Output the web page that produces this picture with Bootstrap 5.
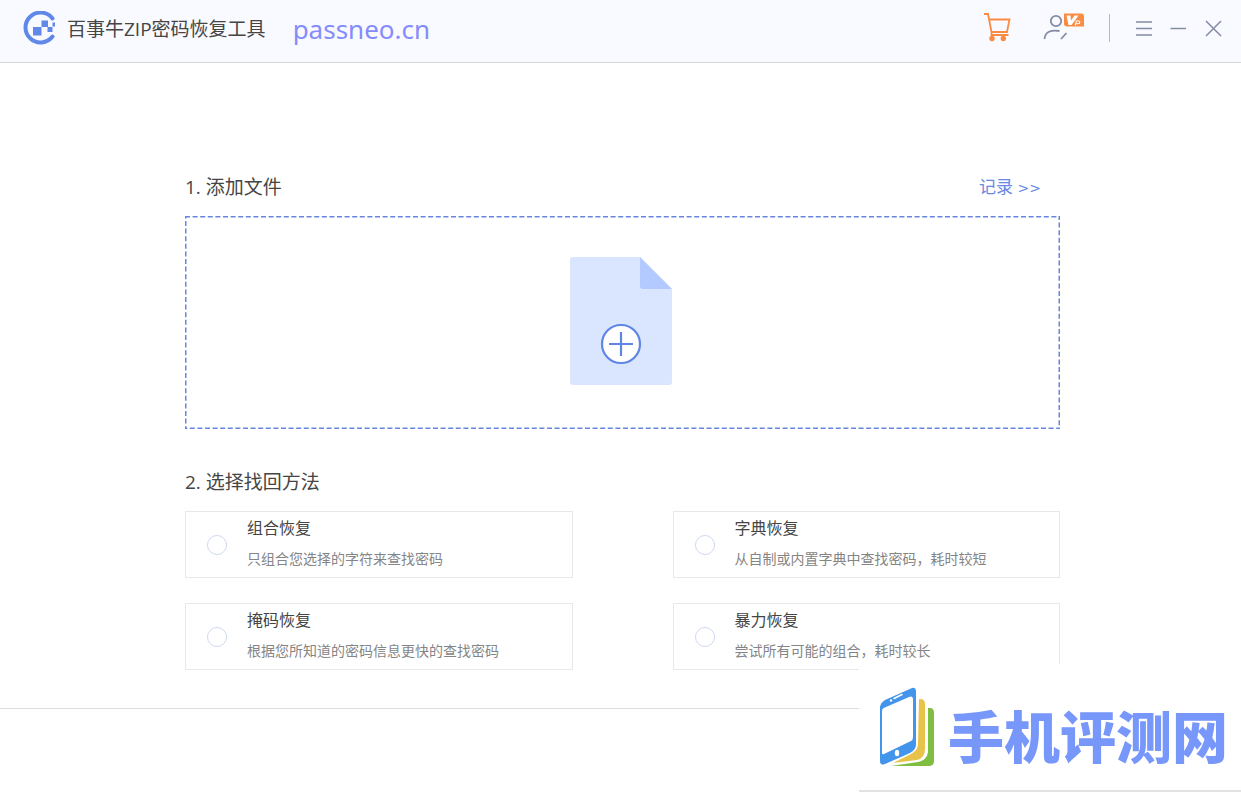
<!DOCTYPE html>
<html lang="zh-CN">
<head>
<meta charset="utf-8">
<meta name="viewport" content="width=device-width, initial-scale=1">
<title>百事牛ZIP密码恢复工具</title>
<link href="https://cdn.jsdelivr.net/npm/bootstrap@5.3.0/dist/css/bootstrap.min.css" rel="stylesheet">
<style>
  body { font-family: "Open Sans", "Noto Sans CJK SC", sans-serif; color: #454545; background: #fff; }
  .titlebar { height: 63px; background: #f9faff; border-bottom: 1px solid #d4d6da; padding: 0 17px 6px 22px; }
  .app-name { font-size: 19px; line-height: 28px; font-weight: 400; margin-left: 11px; padding-top: 1px; }
  .site-link { font-family: "Noto Sans", sans-serif; font-size: 26px; line-height: 32px; color: #848cfc; margin-left: 27px; padding-top: 2px; }
  .tool-btn { color: #858ba3; }
  .tool-btn svg { display: block; }
  .divider { width: 1px; height: 28px; background: #b0b8d4; }
  .workspace { padding: 109px 181px 38px 185px; border-bottom: 1px solid #dedede; }
  .step-title { font-size: 19px; line-height: 30px; font-weight: 400; margin: 0; }
  .history-link { font-size: 17px; line-height: 30px; color: #6788e4; margin-right: 19px; }
  .arrows { font-family: "DejaVu Sans", sans-serif; font-size: 14px; }
  .drop-zone { height: 213px; background: none; margin-top: 13px; padding: 0 3px 3px 0; }
  .drop-zone .outline { position: absolute; inset: 0; width: 100%; height: 100%; }
  .second-step { margin-top: 38px; }
  .methods { display: grid; grid-template-columns: 1fr 1fr; gap: 25px 100px; margin-top: 14px; }
  .method { height: 67px; border: 1px solid #e8e8e8; padding: 0 20px 0 21px; cursor: pointer; }
  .method .form-check-input { width: 20px; height: 20px; margin: 0 20px 0 0; border-color: #d0d8f0; flex: none; }
  .method-text { padding-bottom: 3px; }
  .method-name { font-size: 16px; line-height: 24px; }
  .method-note { font-size: 14px; line-height: 22px; margin-top: 8px; color: #858585; }
  .watermark { right: 0; bottom: 0; width: 382px; height: 128px; background: #fff; border-bottom: 2px solid #e2e2e2; padding: 0 14px 0 20px; }
  .watermark-name { font-family: "Noto Sans CJK SC", sans-serif; font-size: 56px; line-height: 64px; font-weight: 900; color: #7797fa; margin-left: 11px; white-space: nowrap; padding-top: 14px; }
</style>
</head>
<body class="position-relative min-vh-100">
<header class="titlebar d-flex align-items-center">
  <svg width="34" height="34" viewBox="0 0 34 34" aria-hidden="true">
    <path d="M30.500 7.500A15 15 0 1 0 30.500 25.500" fill="none" stroke="#5f88e8" stroke-width="4" stroke-linecap="round"/>
    <g fill="#5f88e8"><rect x="11" y="16" width="8.500" height="8.500"/><rect x="19.500" y="9.500" width="6.500" height="6.500"/><rect x="25.500" y="16" width="5" height="5"/><rect x="30.500" y="11.500" width="2.500" height="4"/></g>
  </svg>
  <h1 class="app-name mb-0">百事牛ZIP密码恢复工具</h1>
  <a class="site-link text-decoration-none" href="#">passneo.cn</a>
  <div class="d-flex align-items-center ms-auto">
    <button class="btn p-0 border-0 tool-btn" aria-label="购买">
      <svg width="28" height="30" viewBox="0 0 28 30" fill="none" stroke="#fa8b42" stroke-width="1.800">
        <path d="M1 1h4l3.500 18h16.500M6 6.500h20.500l-2.500 12.500M8.500 19v3h17"/>
        <g fill="#fa8b42" stroke="none"><circle cx="9" cy="25.500" r="2.700"/><circle cx="20.300" cy="25.500" r="2.700"/></g>
      </svg>
    </button>
    <button class="btn p-0 border-0 tool-btn ms-4 ps-2" aria-label="账户">
      <svg width="42" height="30" viewBox="0 0 42 30" fill="none" stroke="#858ba3" stroke-width="1.800">
        <circle cx="13" cy="8" r="5.200"/>
        <path d="M1.500 26C2 19 8 16.500 16.500 18M18 26l5.500-6"/>
        <path d="M21 .5h17a3 3 0 0 1 3 3v10H24a3 3 0 0 1-3-3z" fill="#fa8b42" stroke="none"/>
        <path d="M23.500 2.500h4l.5 5 3.500-5h4l-7 9.500h-3z" fill="#fff" stroke="none"/>
        <path d="M32.300 12.500l1-4.500h2.200c2 0 1.600 2.800-.4 2.800h-2.300" stroke="#fff" stroke-width="1.100"/>
      </svg>
    </button>
    <span class="divider ms-4"></span>
    <button class="btn p-0 border-0 tool-btn ms-4" aria-label="菜单">
      <svg width="20" height="20" viewBox="0 0 20 20" fill="none" stroke="currentColor" stroke-width="1.500"><path d="M2 4h16M2 10.500h16M2 17h16"/></svg>
    </button>
    <button class="btn p-0 border-0 tool-btn ms-3" aria-label="最小化">
      <svg width="16" height="20" viewBox="0 0 16 20" fill="none" stroke="currentColor" stroke-width="1.500"><path d="M.5 10.500H16"/></svg>
    </button>
    <button class="btn p-0 border-0 tool-btn ms-3" aria-label="关闭">
      <svg width="22" height="20" viewBox="0 0 22 20" fill="none" stroke="currentColor" stroke-width="1.500"><path d="M4 3l15 15M19 3L4 18"/></svg>
    </button>
  </div>
</header>

<main class="workspace">
  <div class="d-flex justify-content-between">
    <h2 class="step-title">1. 添加文件</h2>
    <a class="history-link text-decoration-none" href="#">记录 <span class="arrows">&gt;&gt;</span></a>
  </div>
  <button class="drop-zone btn border-0 rounded-0 w-100 d-flex align-items-center justify-content-center position-relative" aria-label="添加文件">
    <svg class="outline" aria-hidden="true"><rect x="0" y="0" width="100%" height="100%" fill="none" stroke="#6686e0" stroke-width="3" stroke-dasharray="5 2.600"/></svg>
    <svg width="104" height="128" viewBox="0 0 104 128" aria-hidden="true">
      <path d="M4 0h67l32 32v93a3 3 0 0 1-3 3H4a3 3 0 0 1-3-3V3a3 3 0 0 1 3-3z" fill="#dae6ff"/>
      <path d="M71 0l32 32H74a3 3 0 0 1-3-3z" fill="#b2caff"/>
      <circle cx="52" cy="87" r="19" fill="#fff" stroke="#5f85e5" stroke-width="2.200"/>
      <path d="M52 75v24M40 87h24" stroke="#5f85e5" stroke-width="2.200"/>
    </svg>
  </button>
  <h2 class="step-title second-step" id="methodTitle">2. 选择找回方法</h2>
  <div class="methods" role="radiogroup" aria-labelledby="methodTitle">
    <label class="method d-flex align-items-center" for="m1">
      <input class="form-check-input" type="radio" name="method" id="m1">
      <span class="method-text"><span class="method-name d-block">组合恢复</span><span class="method-note d-block">只组合您选择的字符来查找密码</span></span>
    </label>
    <label class="method d-flex align-items-center" for="m2">
      <input class="form-check-input" type="radio" name="method" id="m2">
      <span class="method-text"><span class="method-name d-block">字典恢复</span><span class="method-note d-block">从自制或内置字典中查找密码，耗时较短</span></span>
    </label>
    <label class="method d-flex align-items-center" for="m3">
      <input class="form-check-input" type="radio" name="method" id="m3">
      <span class="method-text"><span class="method-name d-block">掩码恢复</span><span class="method-note d-block">根据您所知道的密码信息更快的查找密码</span></span>
    </label>
    <label class="method d-flex align-items-center" for="m4">
      <input class="form-check-input" type="radio" name="method" id="m4">
      <span class="method-text"><span class="method-name d-block">暴力恢复</span><span class="method-note d-block">尝试所有可能的组合，耗时较长</span></span>
    </label>
  </div>
</main>

<aside class="watermark position-absolute d-flex align-items-center">
  <svg class="flex-shrink-0" width="58" height="82" viewBox="0 0 58 82" aria-hidden="true">
    <path d="M49 22h2q4 0 4 5v48q0 5-5 5H12l27-4q9-2 10-10z" fill="#7fbe40"/>
    <path d="M40 13h1q5 0 5 5v45q0 9-8 11l-24 3 18-9q7-4 7-10z" fill="#e8c349"/>
    <path fill-rule="evenodd" d="M1 22q0-5 5-8L33 2q4-1 4 4v52q0 6-6 9L6 78q-5 2-5-3zM3 25v42q0 2 2 1l27-13q2-1 2-4V14q0-5-4-3L7 21q-4 1-4 4z" fill="#4295ea"/>
    <path d="M15 12.500l8-4" stroke="#fff" stroke-width="1.600" stroke-linecap="round"/>
    <circle cx="12" cy="14.500" r="1.200" fill="#fff"/>
    <ellipse cx="18" cy="67" rx="2.200" ry="3.200" fill="#fff"/>
  </svg>
  <div class="watermark-name">手机评测网</div>
</aside>
<script src="https://cdn.jsdelivr.net/npm/bootstrap@5.3.0/dist/js/bootstrap.bundle.min.js"></script>
</body>
</html>
